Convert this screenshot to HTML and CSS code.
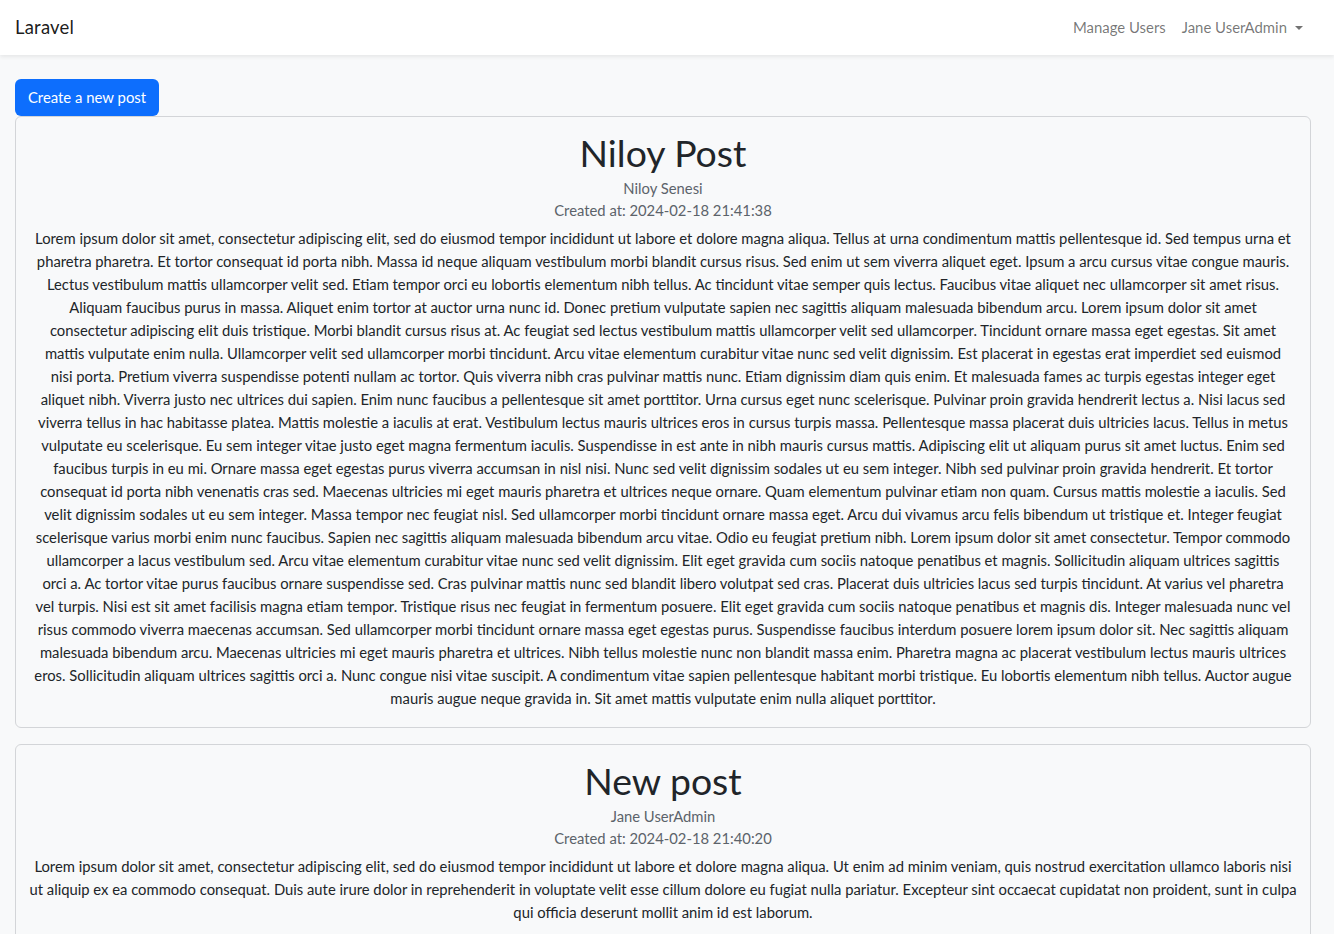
FILE: index.html
```html
<!DOCTYPE html>
<html lang="en">
<head>
<meta charset="utf-8">
<title>Laravel</title>
<link rel="stylesheet" href="styles.css">
</head>
<body>
<nav class="navbar">
  <a class="brand" href="#">Laravel</a>
  <div class="nav-links">
    <a class="nav-link" href="#">Manage Users</a>
    <a class="nav-link dropdown" href="#">Jane UserAdmin <span class="caret"></span></a>
  </div>
</nav>
<main class="main">
  <a class="btn" href="#">Create a new post</a>
  <article class="card">
    <h1 class="post-title">Niloy Post</h1>
    <div class="meta">Niloy Senesi</div>
    <div class="meta">Created at: 2024-02-18 21:41:38</div>
    <p class="post-body">Lorem ipsum dolor sit amet, consectetur adipiscing elit, sed do eiusmod tempor incididunt ut labore et dolore magna aliqua. Tellus at urna condimentum mattis pellentesque id. Sed tempus urna et<br>pharetra pharetra. Et tortor consequat id porta nibh. Massa id neque aliquam vestibulum morbi blandit cursus risus. Sed enim ut sem viverra aliquet eget. Ipsum a arcu cursus vitae congue mauris.<br>Lectus vestibulum mattis ullamcorper velit sed. Etiam tempor orci eu lobortis elementum nibh tellus. Ac tincidunt vitae semper quis lectus. Faucibus vitae aliquet nec ullamcorper sit amet risus.<br>Aliquam faucibus purus in massa. Aliquet enim tortor at auctor urna nunc id. Donec pretium vulputate sapien nec sagittis aliquam malesuada bibendum arcu. Lorem ipsum dolor sit amet<br>consectetur adipiscing elit duis tristique. Morbi blandit cursus risus at. Ac feugiat sed lectus vestibulum mattis ullamcorper velit sed ullamcorper. Tincidunt ornare massa eget egestas. Sit amet<br>mattis vulputate enim nulla. Ullamcorper velit sed ullamcorper morbi tincidunt. Arcu vitae elementum curabitur vitae nunc sed velit dignissim. Est placerat in egestas erat imperdiet sed euismod<br>nisi porta. Pretium viverra suspendisse potenti nullam ac tortor. Quis viverra nibh cras pulvinar mattis nunc. Etiam dignissim diam quis enim. Et malesuada fames ac turpis egestas integer eget<br>aliquet nibh. Viverra justo nec ultrices dui sapien. Enim nunc faucibus a pellentesque sit amet porttitor. Urna cursus eget nunc scelerisque. Pulvinar proin gravida hendrerit lectus a. Nisi lacus sed<br>viverra tellus in hac habitasse platea. Mattis molestie a iaculis at erat. Vestibulum lectus mauris ultrices eros in cursus turpis massa. Pellentesque massa placerat duis ultricies lacus. Tellus in metus<br>vulputate eu scelerisque. Eu sem integer vitae justo eget magna fermentum iaculis. Suspendisse in est ante in nibh mauris cursus mattis. Adipiscing elit ut aliquam purus sit amet luctus. Enim sed<br>faucibus turpis in eu mi. Ornare massa eget egestas purus viverra accumsan in nisl nisi. Nunc sed velit dignissim sodales ut eu sem integer. Nibh sed pulvinar proin gravida hendrerit. Et tortor<br>consequat id porta nibh venenatis cras sed. Maecenas ultricies mi eget mauris pharetra et ultrices neque ornare. Quam elementum pulvinar etiam non quam. Cursus mattis molestie a iaculis. Sed<br>velit dignissim sodales ut eu sem integer. Massa tempor nec feugiat nisl. Sed ullamcorper morbi tincidunt ornare massa eget. Arcu dui vivamus arcu felis bibendum ut tristique et. Integer feugiat<br>scelerisque varius morbi enim nunc faucibus. Sapien nec sagittis aliquam malesuada bibendum arcu vitae. Odio eu feugiat pretium nibh. Lorem ipsum dolor sit amet consectetur. Tempor commodo<br>ullamcorper a lacus vestibulum sed. Arcu vitae elementum curabitur vitae nunc sed velit dignissim. Elit eget gravida cum sociis natoque penatibus et magnis. Sollicitudin aliquam ultrices sagittis<br>orci a. Ac tortor vitae purus faucibus ornare suspendisse sed. Cras pulvinar mattis nunc sed blandit libero volutpat sed cras. Placerat duis ultricies lacus sed turpis tincidunt. At varius vel pharetra<br>vel turpis. Nisi est sit amet facilisis magna etiam tempor. Tristique risus nec feugiat in fermentum posuere. Elit eget gravida cum sociis natoque penatibus et magnis dis. Integer malesuada nunc vel<br>risus commodo viverra maecenas accumsan. Sed ullamcorper morbi tincidunt ornare massa eget egestas purus. Suspendisse faucibus interdum posuere lorem ipsum dolor sit. Nec sagittis aliquam<br>malesuada bibendum arcu. Maecenas ultricies mi eget mauris pharetra et ultrices. Nibh tellus molestie nunc non blandit massa enim. Pharetra magna ac placerat vestibulum lectus mauris ultrices<br>eros. Sollicitudin aliquam ultrices sagittis orci a. Nunc congue nisi vitae suscipit. A condimentum vitae sapien pellentesque habitant morbi tristique. Eu lobortis elementum nibh tellus. Auctor augue<br>mauris augue neque gravida in. Sit amet mattis vulputate enim nulla aliquet porttitor.</p>
  </article>
  <article class="card">
    <h1 class="post-title">New post</h1>
    <div class="meta">Jane UserAdmin</div>
    <div class="meta">Created at: 2024-02-18 21:40:20</div>
    <p class="post-body">Lorem ipsum dolor sit amet, consectetur adipiscing elit, sed do eiusmod tempor incididunt ut labore et dolore magna aliqua. Ut enim ad minim veniam, quis nostrud exercitation ullamco laboris nisi<br>ut aliquip ex ea commodo consequat. Duis aute irure dolor in reprehenderit in voluptate velit esse cillum dolore eu fugiat nulla pariatur. Excepteur sint occaecat cupidatat non proident, sunt in culpa<br>qui officia deserunt mollit anim id est laborum.</p>
  </article>
</main>
</body>
</html>
```

FILE: styles.css
```css
* { box-sizing: border-box; }

html, body {
  margin: 0;
  padding: 0;
}

body {
  background: #f8f9fa;
  color: #212529;
  font-family: "Lato", "Noto Sans", sans-serif;
  font-size: 14.8px;
  line-height: 1.6;
}

a { text-decoration: none; }

.navbar {
  height: 55px;
  background: #fff;
  box-shadow: 0 2px 4px rgba(0, 0, 0, 0.075);
  display: flex;
  align-items: center;
  justify-content: space-between;
  padding: 0 31px 0 15px;
  position: relative;
  z-index: 1;
}

.brand {
  color: rgba(0, 0, 0, 0.9);
  font-size: 18.5px;
  letter-spacing: 0.2px;
}

.nav-links {
  display: flex;
  align-items: center;
  gap: 16px;
}

.nav-link {
  color: rgba(0, 0, 0, 0.55);
  font-size: 14.9px;
  display: flex;
  align-items: center;
}

.caret {
  display: inline-block;
  margin-left: 8px;
  border-top: 4.5px solid rgba(0, 0, 0, 0.55);
  border-left: 4.5px solid transparent;
  border-right: 4.5px solid transparent;
  width: 0;
  height: 0;
}

.main {
  padding: 24px 23px 0 15px;
}

.btn {
  display: inline-flex;
  align-items: center;
  justify-content: center;
  width: 144px;
  height: 37px;
  background: #0d6efd;
  color: #fff;
  border-radius: 6px;
  font-size: 14.9px;
}

.card {
  border: 1px solid #d3d5d8;
  border-radius: 6px;
  background: #f8f9fa;
  padding: 14px 12px 17px;
  margin-bottom: 16px;
  text-align: center;
}

.post-title {
  margin: 0 0 3px;
  font-size: 37.4px;
  font-weight: 400;
  line-height: 43px;
  color: #212529;
}

.meta {
  font-size: 14.8px;
  line-height: 22px;
  color: #5c636a;
}

.post-body {
  margin: 6px 0 0;
  font-size: 14.8px;
  line-height: 23px;
  color: #212529;
}
```
